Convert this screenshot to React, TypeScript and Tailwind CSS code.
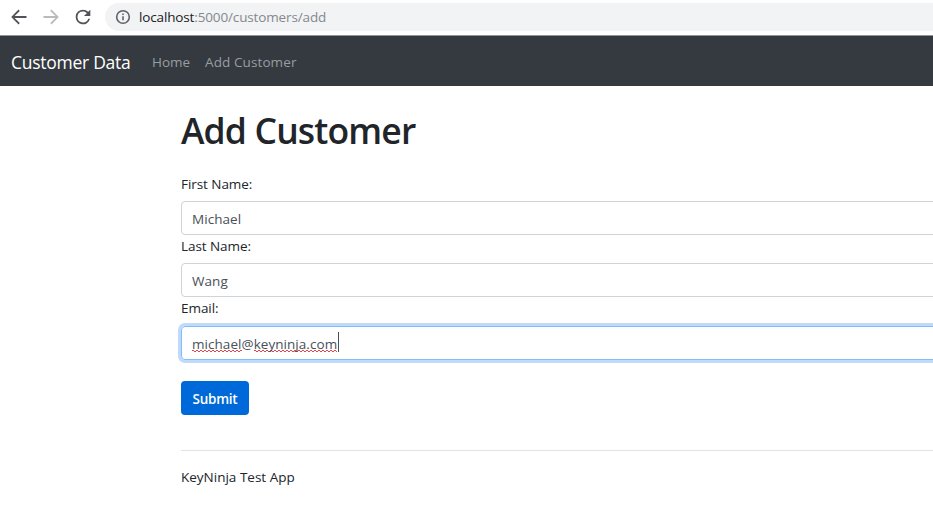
import React from 'react';

function Arrow({ className }: { className: string }) {
  return (
    <svg width="24" height="24" viewBox="0 0 24 24" fill="currentColor" className={className}>
      <path d="M19.500 11.100H7.600l5.200-5.200-1.300-1.300L4.200 12l7.300 7.400 1.300-1.300-5.200-5.200h11.900z" />
    </svg>
  );
}

function BrowserBar() {
  return (
    <header className="flex h-[35px] items-center pb-px pl-[7px]">
      <Arrow className="text-[#505357]" />
      <Arrow className="ml-2 -scale-x-100 text-[#b9bbbd]" />
      <svg width="22" height="22" viewBox="0 0 24 24" fill="#505357" className="ml-[9px]">
        <path d="M17.650 6.350A7.960 7.960 0 0 0 12 4a8 8 0 1 0 7.730 10h-2.080A6 6 0 1 1 12 6c1.660 0 3.140.690 4.220 1.780L13 11h7V4z" />
      </svg>
      <div className="ml-[11px] flex h-[28px] grow items-center rounded-l-full bg-[#f1f3f4] pl-[10px]">
        <svg width="16" height="16" viewBox="0 0 16 16" fill="none" stroke="#5f6368" strokeWidth="1.6">
          <circle cx="8" cy="8" r="6.300" />
          <path d="M8 7.200v4M8 4.500v1.500" />
        </svg>
        <span className="ml-2 text-[13.5px] tracking-[-0.14px] text-[#85898c]">
          <span className="text-[#202124]">localhost</span>:5000/customers/add
        </span>
      </div>
    </header>
  );
}

function Label({ text }: { text: string }) {
  return (
    <div className="h-7 leading-[22px]">
      <label className="tracking-[-0.06px]">{text}</label>
    </div>
  );
}

function Field({ label, value }: { label: string; value: string }) {
  return (
    <div className="h-[62px]">
      <Label text={label} />
      <div className="flex h-[34px] items-center rounded-[4px] border border-[#ced4da] pt-0.5 pl-2.5 tracking-[0.05px] text-[#495057]">{value}</div>
    </div>
  );
}

const misspelled =
  'bg-[linear-gradient(90deg,#e8424b_50%,transparent_50%),linear-gradient(90deg,transparent_50%,#e8424b_50%)] bg-[length:4px_1px,4px_1px] bg-[position:0_16px,0_17px] bg-repeat-x';

export default function App() {
  return (
    <div className="h-[519px] w-[933px] overflow-hidden bg-white font-['Open_Sans','Noto_Sans',sans-serif] text-[13.5px] text-[#212529]">
      <BrowserBar />
      <nav className="flex h-[51px] items-center border-t border-[#919396] bg-[#343a40] pt-0.5 pl-[11px] text-[#9a9da0]">
        <a className="w-[141px] text-[17.5px] tracking-[-0.27px] text-white">Customer Data</a>
        <a className="w-[53px]">Home</a>
        <a className="tracking-[0.1px]">Add Customer</a>
      </nav>
      <main className="ml-[181px] w-[900px]">
        <h1 className="h-[87px] pt-[23px] text-[35.5px] leading-[42px] font-semibold tracking-[-0.85px]">Add Customer</h1>
        <Field label="First Name:" value="Michael" />
        <Field label="Last Name:" value="Wang" />
        <Label text="Email:" />
        <div className="mt-px flex h-[34px] items-center rounded-[4px] border border-[#80bdff] pt-0.5 pl-2.5 tracking-[0.05px] text-[#495057] shadow-[0_0_0_3px_#c1dafa]">
          <span className={misspelled}>michael</span>
          <span>@</span>
          <span className={misspelled}>keyninja.com</span>
          <span className="-mt-1 ml-px h-5 w-px bg-[#495057]" />
        </div>
        <button className="mt-[21px] block h-[34px] w-[68px] rounded-[4px] bg-[#0069d9] pt-[3px] text-[13.5px] font-semibold tracking-[-0.25px] text-white">Submit</button>
        <hr className="mt-[35px] border-[#e3e3e3]" />
        <footer className="pt-[15px] leading-[22px]">KeyNinja Test App</footer>
      </main>
    </div>
  );
}
